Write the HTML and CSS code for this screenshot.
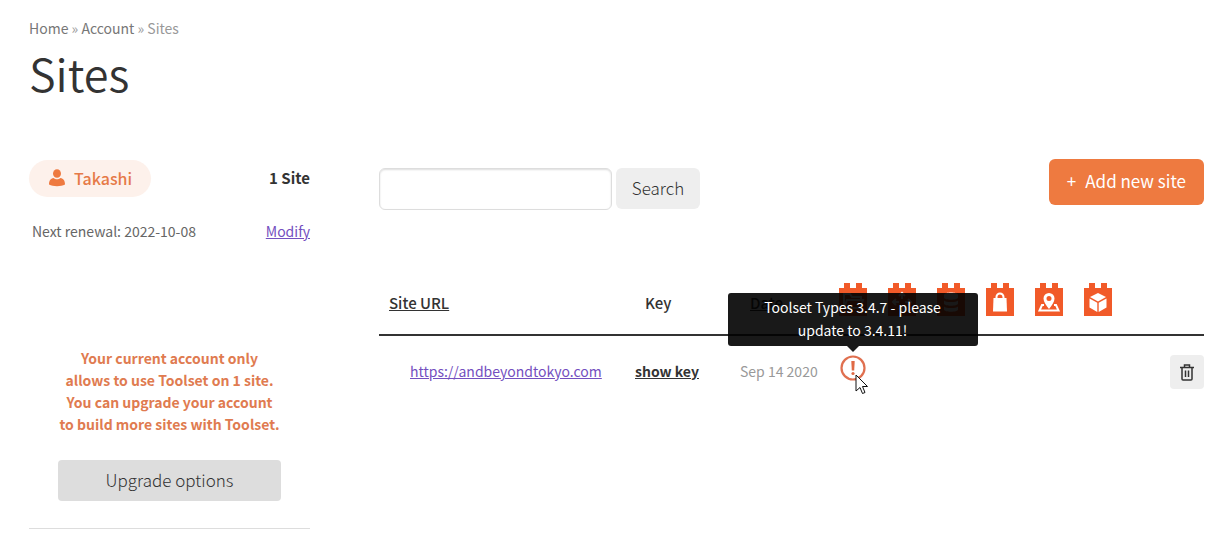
FILE: index.html
```html
<!DOCTYPE html>
<html lang="en">
<head>
    <meta charset="UTF-8">
    <meta name="viewport" content="width=device-width, initial-scale=1.0">
    <title>Sites - Account</title>
    <link rel="stylesheet" href="styles.css">
</head>
<body>
    <header>
        <nav class="breadcrumbs">
            <a href="#">Home</a> » <a href="#">Account</a> » <span>Sites</span>
        </nav>
        <h1>Sites</h1>
    </header>

    <div class="account">
        <aside class="sidebar">
            <div class="sidebar-row">
                <a href="#" class="user">
                    <svg width="18" height="18" viewBox="0 0 18 18" fill="#ee7a40">
                        <ellipse cx="9" cy="4.5" rx="4" ry="4.3"/>
                        <path d="M1 15.5c0-4 1.600-5.800 4.500-6.500 1 .9 2.200 1.300 3.500 1.300s2.500-.4 3.500-1.300c2.900.7 4.500 2.500 4.500 6.500-2 1.300-5 1.700-8 1.700s-6-.4-8-1.700z"/>
                    </svg>
                    Takashi
                </a>
                <strong class="site-count">1 Site</strong>
            </div>
            <div class="sidebar-row renewal">
                <span>Next renewal: 2022-10-08</span>
                <a href="#">Modify</a>
            </div>
            <div class="upgrade">
                <p>Your current account only<br>allows to use Toolset on 1 site.<br>You can upgrade your account<br>to build more sites with Toolset.</p>
                <button type="button">Upgrade options</button>
            </div>
        </aside>

        <main>
            <div class="toolbar">
                <form class="search">
                    <input type="text" name="s" aria-label="Search sites">
                    <button type="button">Search</button>
                </form>
                <button type="button" class="add-site"><span>+</span>Add new site</button>
            </div>

            <table>
                <colgroup>
                    <col>
                    <col class="col-key">
                    <col class="col-date">
                    <col class="col-plugin" span="6">
                    <col class="col-actions">
                </colgroup>
                <thead>
                    <tr>
                        <th class="url"><a href="#">Site URL</a></th>
                        <th>Key</th>
                        <th><a href="#">Date</a></th>
                        <th class="plugin">
                            <svg width="28" height="33" viewBox="0 0 28 33">
                                <path class="brick" d="M0 5h5V0h6v5h6V0h6v5h5v28H0z"/>
                                <path class="line" d="M5 25V11h6l2 3h9v3M5 25l3-8h16l-3 8z"/>
                            </svg>
                        </th>
                        <th class="plugin">
                            <svg width="28" height="33" viewBox="0 0 28 33">
                                <path class="brick" d="M0 5h5V0h6v5h6V0h6v5h5v28H0z"/>
                                <path class="line" d="M14 10v6M14 22v6M5 19h6M17 19h6M11 13l3-3 3 3M11 25l3 3 3-3M8 16l-3 3 3 3M20 16l3 3-3 3"/>
                            </svg>
                        </th>
                        <th class="plugin">
                            <svg width="28" height="33" viewBox="0 0 28 33">
                                <path class="brick" d="M0 5h5V0h6v5h6V0h6v5h5v28H0z"/>
                                <path class="shape" d="M7 12c0-3.500 14-3.500 14 0v2.500c0 3-14 3-14 0zM7 17.500c2 2 12 2 14 0v3c0 3-14 3-14 0zM7 23.500c2 2 12 2 14 0v3c0 3-14 3-14 0z"/>
                            </svg>
                        </th>
                        <th class="plugin">
                            <svg width="28" height="33" viewBox="0 0 28 33">
                                <path class="brick" d="M0 5h5V0h6v5h6V0h6v5h5v28H0z"/>
                                <path class="shape" d="M7.500 15h13l.5 13.500H7z"/>
                                <path class="line" d="M10.500 17v-3a3.500 3.500 0 0 1 7 0v3"/>
                            </svg>
                        </th>
                        <th class="plugin">
                            <svg width="28" height="33" viewBox="0 0 28 33">
                                <path class="brick" d="M0 5h5V0h6v5h6V0h6v5h5v28H0z"/>
                                <path class="line" d="M9 22H7l-2.500 5.500h19L21 22h-2"/>
                                <path class="shape" fill-rule="evenodd" d="M14 26c-3-4-5.500-7-5.500-10.500a5.500 5.500 0 0 1 11 0C19.500 19 17 22 14 26zm0-13a2.500 2.500 0 1 0 0 5 2.500 2.500 0 0 0 0-5z"/>
                            </svg>
                        </th>
                        <th class="plugin">
                            <svg width="28" height="33" viewBox="0 0 28 33">
                                <path class="brick" d="M0 5h5V0h6v5h6V0h6v5h5v28H0z"/>
                                <path class="shape" d="M14 10l8 4-8 4.500L6 14zM5.500 15.500l7.800 4.300V29l-7.800-4.500zM22.500 15.500l-7.800 4.300V29l7.800-4.500z"/>
                            </svg>
                        </th>
                        <th></th>
                    </tr>
                </thead>
                <tbody>
                    <tr>
                        <td class="url"><a href="#">https://andbeyondtokyo.com</a></td>
                        <td class="key"><a href="#">show key</a></td>
                        <td class="date">Sep 14 2020</td>
                        <td class="plugin">
                            <div class="status">
                                <svg width="26" height="26" viewBox="0 0 26 26">
                                    <circle cx="13" cy="13" r="11.500" fill="none" stroke="#e07050" stroke-width="2.200"/>
                                    <path d="M11.300 6h3.400l-.5 9.500h-2.400z" fill="#e06a45"/>
                                    <circle cx="13" cy="18.500" r="1.600" fill="#e06a45"/>
                                </svg>
                                <div class="tooltip" role="tooltip">Toolset Types 3.4.7 - please update to 3.4.11!</div>
                                <svg class="pointer" width="14" height="21" viewBox="0 0 14 21">
                                    <path d="M1 1v16l4-3.500 2.500 6 2.500-1-2.500-6H12.500z" fill="#fff" stroke="#111" stroke-width="1"/>
                                </svg>
                            </div>
                        </td>
                        <td></td>
                        <td></td>
                        <td></td>
                        <td></td>
                        <td></td>
                        <td class="actions">
                            <button type="button" aria-label="Delete site">
                                <svg width="14" height="17" viewBox="0 0 14 17" fill="none" stroke="#333" stroke-width="1.500">
                                    <path d="M0 3.500h14M4.500 3.500V1h5v2.500M2 3.500v11.500q0 1 1 1h8q1 0 1-1V3.500M5.500 6.500v6.500M8.500 6.500v6.500"/>
                                </svg>
                            </button>
                        </td>
                    </tr>
                </tbody>
            </table>
        </main>
    </div>
</body>
</html>
```
FILE: styles.css
```css
* {
    box-sizing: border-box;
}
body {
    margin: 0;
    padding: 16px 24px 0 29px;
    font-family: "Source Sans Pro", "Noto Sans CJK JP", sans-serif;
    font-size: 14px;
    line-height: 24px;
    color: #333;
    background: #fff;
}
button, input {
    font-family: inherit;
}
button {
    padding: 0 0 2px;
    border: none;
    cursor: pointer;
    color: #333;
    font-size: 17px;
    font-weight: 300;
    line-height: 24px;
}
svg {
    display: block;
}
.breadcrumbs {
    color: #999;
}
.breadcrumbs a {
    color: #777;
    text-decoration: none;
}
h1 {
    margin: 1px 0 0;
    font-size: 45px;
    line-height: 64px;
    font-weight: 350;
}
.account {
    display: flex;
    gap: 69px;
    margin-top: 54px;
}

/* sidebar */
.sidebar {
    width: 281px;
    flex-shrink: 0;
    border-bottom: 1px solid #ddd;
    padding: 1px 0 27px;
}
.sidebar-row {
    display: flex;
    justify-content: space-between;
    align-items: center;
}
.user {
    display: flex;
    align-items: center;
    gap: 8px;
    height: 37px;
    padding: 0 19px 2px;
    border-radius: 19px;
    background: #fdf1eb;
    color: #e67a47;
    font-size: 16px;
    font-weight: 500;
    text-decoration: none;
}
.site-count {
    padding-bottom: 2px;
    font-size: 15px;
    font-weight: 700;
}
.renewal {
    margin-top: 22px;
    padding-left: 3px;
    color: #666;
}
.renewal a, td.url a {
    color: #744fc0;
}
.upgrade {
    margin-top: 104px;
    padding: 0 29px;
    text-align: center;
}
.upgrade p {
    margin: 0 0 25px;
    color: #e07b50;
    font-weight: 700;
    line-height: 22px;
    white-space: nowrap;
}
.upgrade button {
    width: 100%;
    height: 41px;
    border-radius: 4px;
    background: #ddd;
}

/* sites */
main {
    flex: 1;
}
.toolbar {
    display: flex;
    justify-content: space-between;
    align-items: flex-start;
}
.search {
    display: flex;
    gap: 4px;
    margin-top: 9px;
}
.search input {
    width: 233px;
    height: 42px;
    padding: 0 10px;
    border: 1px solid #ddd;
    border-radius: 6px;
    box-shadow: inset 0 1px 2px #ddd;
    font-size: 16px;
}
.search button {
    height: 41px;
    width: 84px;
    border-radius: 6px;
    background: #eee;
}
.add-site {
    height: 46px;
    padding: 0 18px 2px;
    border-radius: 6px;
    background: #ee7a40;
    color: #fff;
    font-weight: 400;
}
.add-site span {
    margin-right: 9px;
}
table {
    width: 100%;
    margin-top: 73px;
    table-layout: fixed;
    border-collapse: collapse;
}
.col-key {
    width: 105px;
}
.col-date {
    width: 98px;
}
.col-plugin {
    width: 49px;
}
.col-actions {
    width: 82px;
}
th {
    padding: 0 0 18px 20px;
    border-bottom: 2px solid #333;
    font-size: 15px;
    font-weight: 500;
    line-height: 26px;
    text-align: left;
    vertical-align: bottom;
}
th a, .key a {
    color: #333;
}
th.url {
    padding-left: 10px;
}
th.plugin {
    padding-left: 0;
}
th.plugin svg {
    margin: 0 auto;
}
.brick {
    fill: #f15a29;
}
.shape {
    fill: #fff;
}
.line {
    fill: none;
    stroke: #fff;
    stroke-width: 2;
}
td {
    padding: 19px 0 2px 10px;
    white-space: nowrap;
}
td.url {
    padding-left: 31px;
}
.key {
    font-weight: 700;
}
.date {
    color: #999;
}
td.plugin {
    padding-left: 0;
    vertical-align: top;
}
td.actions {
    padding-bottom: 0;
}
.status {
    position: relative;
    width: 26px;
    margin: 0 auto;
}
.tooltip {
    position: absolute;
    bottom: 35px;
    left: 50%;
    width: 250px;
    margin-left: -125px;
    padding: 3px 30px 4px;
    border-radius: 3px;
    background: rgba(0, 0, 0, 0.9);
    color: #fff;
    line-height: 23px;
    text-align: center;
    white-space: normal;
}
.tooltip::after {
    content: "";
    position: absolute;
    top: 100%;
    left: 50%;
    margin-left: -6px;
    border: 6px solid transparent;
    border-top-color: rgba(0, 0, 0, 0.9);
    border-bottom: none;
}
.pointer {
    position: absolute;
    top: 19px;
    left: 15px;
}
.actions button {
    display: flex;
    align-items: center;
    justify-content: center;
    width: 34px;
    height: 34px;
    margin-left: auto;
    padding: 0;
    border-radius: 4px;
    background: #eee;
}
```
